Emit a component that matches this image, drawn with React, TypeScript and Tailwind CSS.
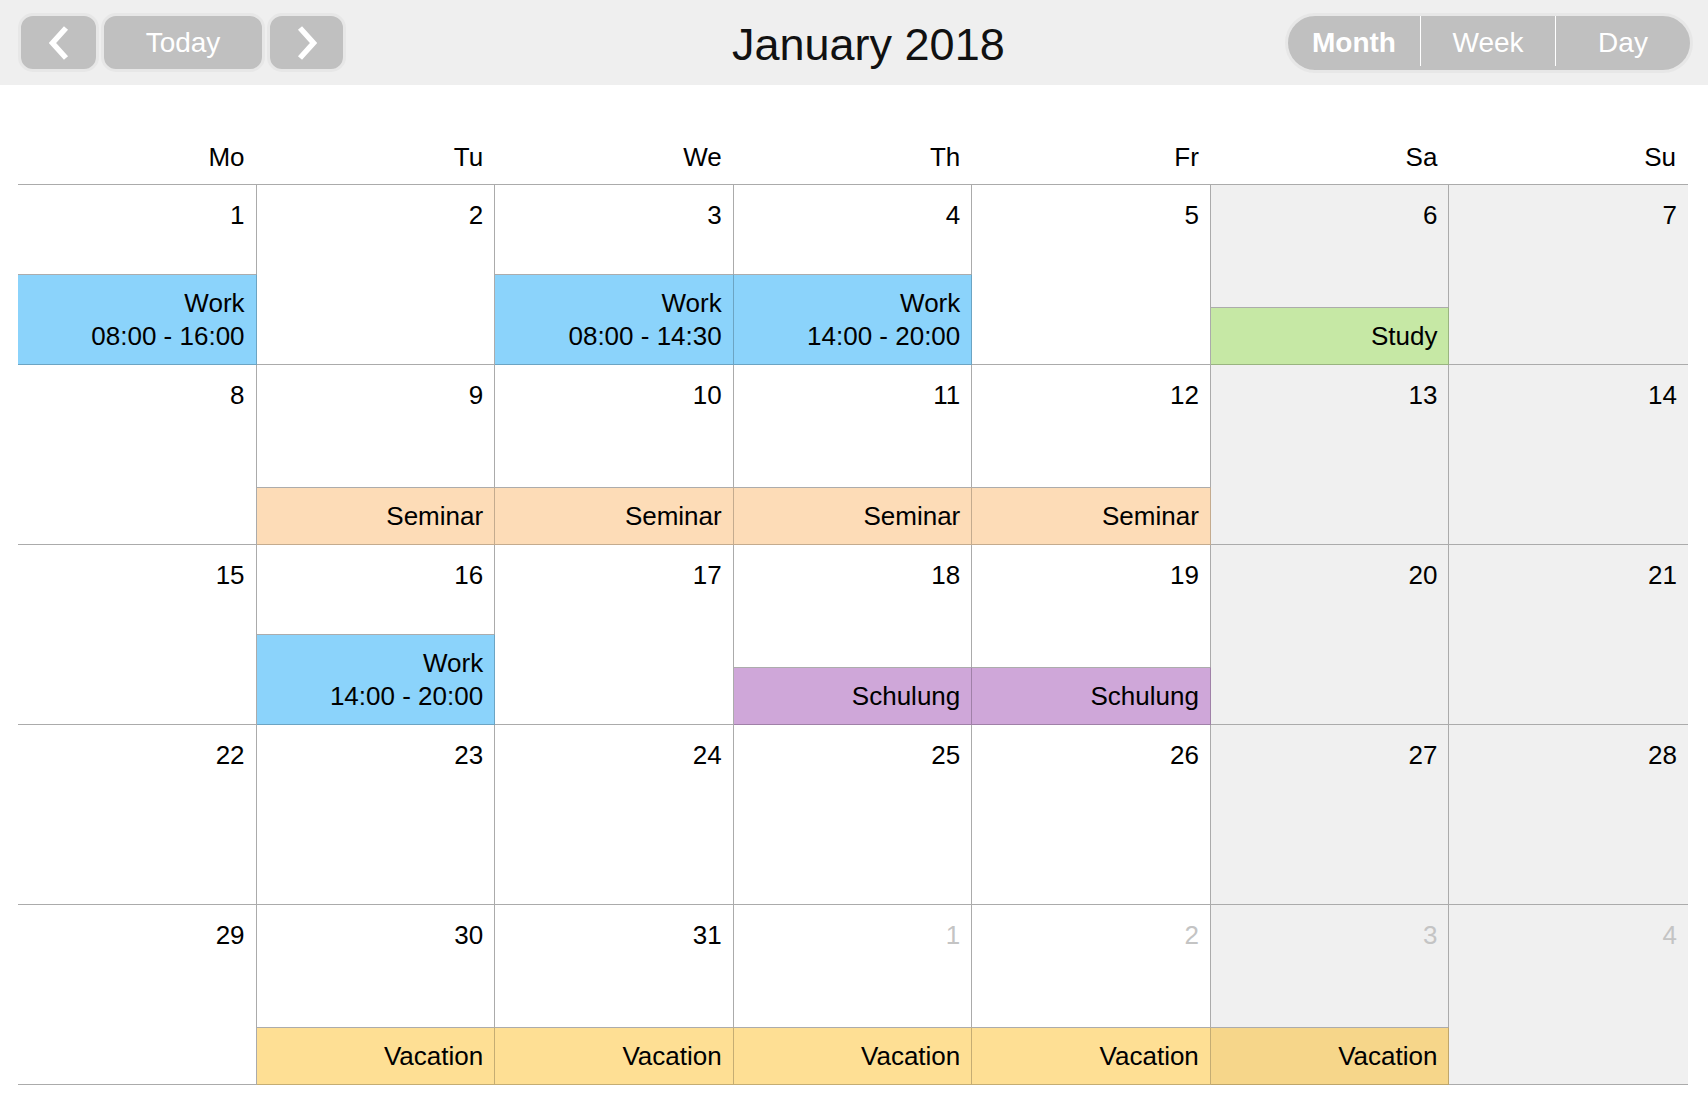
import React from "react";

type Ev = { title: string; time?: string; bg: string };

const BLUE = "bg-[#8bd3fb]";
const GREEN = "bg-[#c6e8a5]";
const PEACH = "bg-[#fddcb7]";
const PURPLE = "bg-[#cfa7d9]";
const YELLOW = "bg-[#fedf94]";
const YELLOW_WE = "bg-[#f6d68a]";

const days = ["Mo", "Tu", "We", "Th", "Fr", "Sa", "Su"];

const events: Record<string, Ev> = {
  "1": { title: "Work", time: "08:00 - 16:00", bg: BLUE },
  "3": { title: "Work", time: "08:00 - 14:30", bg: BLUE },
  "4": { title: "Work", time: "14:00 - 20:00", bg: BLUE },
  "6": { title: "Study", bg: GREEN },
  "9": { title: "Seminar", bg: PEACH },
  "10": { title: "Seminar", bg: PEACH },
  "11": { title: "Seminar", bg: PEACH },
  "12": { title: "Seminar", bg: PEACH },
  "16": { title: "Work", time: "14:00 - 20:00", bg: BLUE },
  "18": { title: "Schulung", bg: PURPLE },
  "19": { title: "Schulung", bg: PURPLE },
  "30": { title: "Vacation", bg: YELLOW },
  "31": { title: "Vacation", bg: YELLOW },
  "f1": { title: "Vacation", bg: YELLOW },
  "f2": { title: "Vacation", bg: YELLOW },
  "f3": { title: "Vacation", bg: YELLOW_WE },
};

const cells = [
  ...Array.from({ length: 31 }, (_, i) => ({ key: String(i + 1), label: i + 1, outside: false })),
  ...[1, 2, 3, 4].map((d) => ({ key: "f" + d, label: d, outside: true })),
];

function Chevron({ dir }: { dir: "left" | "right" }) {
  return (
    <svg width="20" height="34" viewBox="0 0 20 34" fill="none">
      <polyline
        points={dir === "left" ? "17,2 3.5,17 17,32" : "3,2 16.5,17 3,32"}
        stroke="white"
        strokeWidth="5.5"
        strokeLinejoin="miter"
      />
    </svg>
  );
}

function Header() {
  return (
    <div className="h-[85px] bg-[#efefef] flex items-center justify-between px-[18px] relative">
      <div className="flex gap-[2px]">
        <button className="w-[81px] h-[59px] rounded-[15px] bg-[#c0c0c0] border-[3px] border-[#e7e7e7] flex items-center justify-center">
          <Chevron dir="left" />
        </button>
        <button className="w-[164px] h-[59px] rounded-[15px] bg-[#c0c0c0] border-[3px] border-[#e7e7e7] text-white text-[28px]">
          Today
        </button>
        <button className="w-[79px] h-[59px] rounded-[15px] bg-[#c0c0c0] border-[3px] border-[#e7e7e7] flex items-center justify-center">
          <Chevron dir="right" />
        </button>
      </div>
      <div className="absolute left-[732px] top-[19px] text-[45px] leading-[52px] text-[#111]">January 2018</div>
      <div className="-mr-[3px] w-[408px] h-[60px] rounded-full bg-[#c0c0c0] border-[3px] border-[#e7e7e7] flex items-center text-white text-[28px]">
        <div className="w-[132px] text-center font-bold">Month</div>
        <div className="w-px h-[50px] -mt-[4px] bg-white" />
        <div className="w-[134px] text-center">Week</div>
        <div className="w-px h-[50px] -mt-[4px] bg-white" />
        <div className="flex-1 text-center">Day</div>
      </div>
    </div>
  );
}

export default function App() {
  return (
    <div className="w-[1708px] h-[1100px] bg-white text-black font-['Liberation_Sans',Arial,sans-serif] overflow-hidden">
      <Header />
      <div className="mx-[18px] w-[1670px]">
        <div className="grid grid-cols-7 h-[100px] border-b border-[#ababab]">
          {days.map((d) => (
            <div key={d} className="flex items-end justify-end pr-[12px] pb-[12px] text-[26px] leading-[30px]">
              {d}
            </div>
          ))}
        </div>
        <div className="grid grid-cols-7">
          {cells.map((c, i) => {
            const col = i % 7;
            const weekend = col >= 5;
            const ev = events[c.key];
            return (
              <div
                key={c.key}
                className={`h-[180px] flex flex-col border-b border-[#ababab] ${col < 6 ? "border-r" : ""} ${
                  weekend ? "bg-[#f0f0f0]" : "bg-white"
                }`}
              >
                <div
                  className={`pt-[15px] pr-[11px] text-right text-[26px] leading-[30px] ${
                    c.outside ? "text-[#c4c4c4]" : "text-black"
                  }`}
                >
                  {c.label}
                </div>
                {ev && (
                  <div
                    className={`mt-auto -mb-px -mr-px ${ev.bg} border-t border-t-[#acacac] border-r border-b border-r-[rgba(0,0,0,0.22)] border-b-[rgba(0,0,0,0.22)] pt-[12px] pb-[11px] pr-[11px] text-right text-[26px] leading-[33px]`}
                  >
                    <div>{ev.title}</div>
                    {ev.time && <div>{ev.time}</div>}
                  </div>
                )}
              </div>
            );
          })}
        </div>
      </div>
    </div>
  );
}
